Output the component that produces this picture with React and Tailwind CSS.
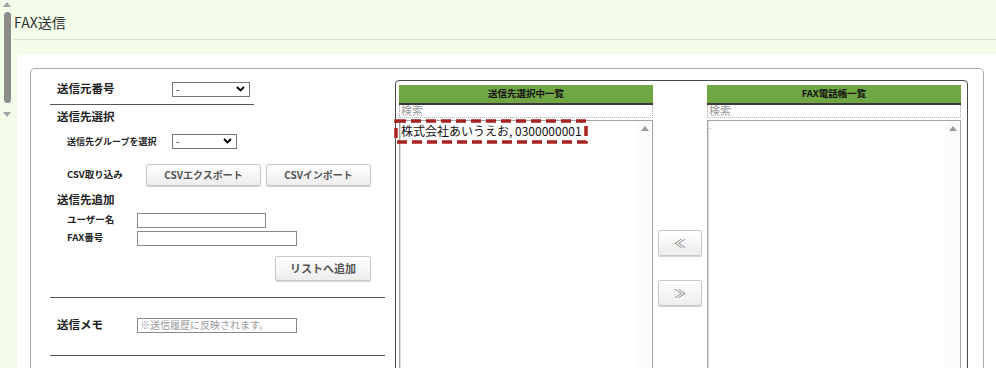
import React from 'react';

// FAX送信 form: sender settings on the left, selection lists on the right
const font = "font-['Noto_Sans_CJK_JP','Noto_Sans',sans-serif]";

const Chevron = () => (
  <svg width="9" height="6" viewBox="0 0 9 6" className="shrink-0">
    <polyline points="1,1 4.5,4.5 8,1" fill="none" stroke="#000" strokeWidth="1.8" />
  </svg>
);

const Select = ({ width }) => (
  <div className={`${width} h-[15px] border border-[#767676] bg-white flex items-center justify-between pl-[3px] pr-[4px] text-[10px] leading-none`}>
    <span>-</span>
    <Chevron />
  </div>
);

const Input = ({ width, placeholder }) => (
  <div className={`${width} h-[15px] border border-[#8a8a8a] bg-white flex items-center pl-[2px] text-[10px] leading-none text-[#9a9a9a] whitespace-nowrap overflow-hidden`}>
    {placeholder}
  </div>
);

const GreyButton = ({ width, height, children, textSize = 'text-[10px]' }) => (
  <div
    className={`${width} ${height} ${textSize} flex items-center justify-center rounded-[2px] border border-[#c9c9c9] bg-gradient-to-b from-white to-[#ededed] shadow-[0_1px_1px_rgba(0,0,0,0.18)] font-bold text-[#555] leading-none whitespace-nowrap`}
  >
    {children}
  </div>
);

const ListColumn = ({ title, children }) => (
  <div className="w-[254px] shrink-0 flex flex-col">
    <div className="h-[18px] bg-[#70a644] flex items-center justify-center text-[9.5px] font-bold text-[#111] leading-none">
      {title}
    </div>
    <div className="h-[2px] bg-[#3a3a3a]" />
    <div className="h-[13px] bg-white border-x border-[#a0a0a0] border-b border-b-[#b5b5b5] border-dotted flex items-center pl-[1px] text-[11px] leading-none text-[#9a9a9a]">
      検索
    </div>
    <div className="mt-[2px] h-[260px] bg-white border border-[#a3a3a3] shadow-[inset_1px_0_0_#dcdcdc,inset_-1px_0_0_#dcdcdc] flex">
      <div className="flex-1 min-w-0">{children}</div>
      <div className="w-[15px] shrink-0 bg-[#fbfbfb] flex justify-center pt-[5px]">
        <div className="w-0 h-0 border-x-[4px] border-x-transparent border-b-[5px] border-b-[#9a9a9a]" />
      </div>
    </div>
  </div>
);

export default function App() {
  return (
    <div className={`w-[996px] h-[368px] overflow-hidden bg-[#f3fce9] flex text-[#222] ${font}`}>
      {/* outer frame scrollbar */}
      <div className="w-[14px] shrink-0 flex flex-col items-center pt-[2px]">
        <div className="w-0 h-0 border-x-[4px] border-x-transparent border-b-[5px] border-b-[#a3a3a3]" />
        <div className="mt-[5px] w-[7px] h-[91px] rounded-full bg-[#8c8c8c]" />
        <div className="mt-[9px] w-0 h-0 border-x-[4px] border-x-transparent border-t-[5px] border-t-[#a3a3a3]" />
      </div>

      <div className="flex-1 min-w-0 flex flex-col">
        <div className="h-[40px] shrink-0 border-b border-[#d8ddd0] flex items-center pt-[5px] text-[14px] text-[#333] leading-none">
          FAX送信
        </div>

        <div className="mt-[15px] ml-[3px] flex-1 bg-white pt-[13px] pl-[13px]">
          <div className="w-[954px] h-[320px] border border-[#a9a9a9] rounded-[5px] flex">
            {/* left form */}
            <div className="w-[364px] shrink-0 flex flex-col pl-[19px]">
              <div className="mt-[11px] h-[18px] flex items-center pl-[7px]">
                <div className="w-[115px] text-[11.5px] font-bold leading-none">送信元番号</div>
                <Select width="w-[78px]" />
              </div>
              <div className="mt-[6px] h-px w-[204px] bg-[#555]" />

              <div className="mt-[3px] h-[18px] flex items-center pl-[7px] text-[11.5px] font-bold leading-none">
                送信先選択
              </div>
              <div className="mt-[6px] h-[18px] flex items-center pl-[17px]">
                <div className="w-[105px] text-[9px] font-bold leading-none">送信先グループを選択</div>
                <Select width="w-[65px]" />
              </div>

              <div className="mt-[14px] h-[22px] flex items-center pl-[17px]">
                <div className="w-[79px] text-[9.5px] font-bold leading-none">CSV取り込み</div>
                <div className="flex gap-[5px]">
                  <GreyButton width="w-[115px]" height="h-[22px]">CSVエクスポート</GreyButton>
                  <GreyButton width="w-[105px]" height="h-[22px]">CSVインポート</GreyButton>
                </div>
              </div>

              <div className="mt-[5px] h-[18px] flex items-center pl-[7px] text-[11.5px] font-bold leading-none">
                送信先追加
              </div>
              <div className="mt-[2px] h-[18px] flex items-center pl-[17px]">
                <div className="w-[70px] text-[9.5px] font-bold leading-none">ユーザー名</div>
                <Input width="w-[129px]" />
              </div>
              <div className="h-[18px] flex items-center pl-[17px]">
                <div className="w-[70px] text-[9.5px] font-bold leading-none">FAX番号</div>
                <Input width="w-[160px]" />
              </div>

              <div className="mt-[9px] w-[335px] flex justify-end pr-[14px]">
                <GreyButton width="w-[96px]" height="h-[25px]" textSize="text-[11px]">リストへ追加</GreyButton>
              </div>
              <div className="mt-[16px] h-px w-[335px] bg-[#555]" />

              <div className="mt-[18px] h-[18px] flex items-center pl-[7px]">
                <div className="w-[80px] text-[11.5px] font-bold leading-none">送信メモ</div>
                <Input width="w-[160px]" placeholder="※送信履歴に反映されます。" />
              </div>
              <div className="mt-[21px] h-px w-[335px] bg-[#555]" />
            </div>

            {/* selection lists */}
            <div className="relative mt-[11px] w-[573px] h-[300px] border border-[#4a4a4a] rounded-[4px] flex pl-[3px] pt-[4px]">
              <ListColumn title="送信先選択中一覧">
                <div className="pl-[1px] pt-[4px] text-[12px] leading-none text-[#111] whitespace-nowrap">
                  株式会社あいうえお, 0300000001
                </div>
              </ListColumn>

              <div className="w-[54px] shrink-0 flex flex-col items-start pl-[5px] pt-[145px] gap-[24px]">
                <GreyButton width="w-[44px]" height="h-[26px]" textSize="text-[12px]">
                  <span className="font-normal text-[#808080]">≪</span>
                </GreyButton>
                <GreyButton width="w-[44px]" height="h-[26px]" textSize="text-[12px]">
                  <span className="font-normal text-[#808080]">≫</span>
                </GreyButton>
              </div>

              <ListColumn title="FAX電話帳一覧">
                <div className="pl-[1px] pt-[3px] text-[7px] leading-none text-[#aaa]">-</div>
              </ListColumn>

              {/* highlight annotation */}
              <svg className="absolute left-[-2px] top-[38px]" width="194" height="25">
                <rect x="2" y="2" width="190" height="21" fill="none" stroke="#a82222" strokeWidth="3.5" strokeDasharray="10 5" />
              </svg>
            </div>
          </div>
        </div>
      </div>
    </div>
  );
}
